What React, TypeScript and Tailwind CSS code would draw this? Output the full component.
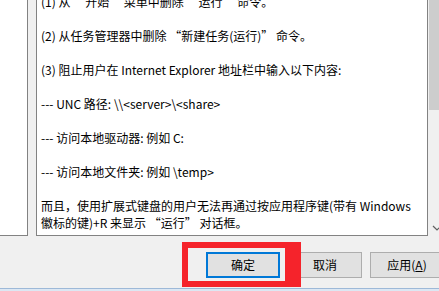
export default function App() {
  const font = { fontFamily: '"Noto Sans CJK SC", "Noto Sans", sans-serif' };
  return (
    <div className="relative h-[291px] w-[439px] overflow-hidden bg-[#f0f0f0] text-black" style={font}>
      {/* upper pane */}
      <div className="flex h-[236px]">
        <div className="w-[28px] shrink-0 border-r border-b border-[#828282] bg-white" />
        <div className="w-[8px] shrink-0" />
        <div className="flex-1 overflow-hidden border-l border-r border-b border-[#828282] bg-white pl-[4px]">
          <div className="mt-[-7px] text-[12px] leading-[17px] whitespace-nowrap">
            <p>(1) 从 “开始” 菜单中删除 “运行” 命令。</p>
            <p>&nbsp;</p>
            <p>(2) 从任务管理器中删除 “新建任务(运行)” 命令。</p>
            <p>&nbsp;</p>
            <p>(3) 阻止用户在 Internet Explorer 地址栏中输入以下内容:</p>
            <p>&nbsp;</p>
            <p>{"--- UNC 路径: \\\\<server>\\<share>"}</p>
            <p>&nbsp;</p>
            <p>--- 访问本地驱动器: 例如 C:</p>
            <p>&nbsp;</p>
            <p>{"--- 访问本地文件夹: 例如 \\temp>"}</p>
            <p>&nbsp;</p>
            <p>
              而且，使用扩展式键盘的用户无法再通过按应用程序键(带有 Windows
              <br />
              徽标的键)+R 来显示 “运行” 对话框。
            </p>
          </div>
        </div>
        <div className="flex w-[11px] shrink-0 flex-col bg-[#f0f0f0] pb-[5px]">
          <div className="ml-[1px] h-[110px] bg-[#cdcdcd]" />
          <div className="flex-1" />
          <svg width="10" height="6" viewBox="0 0 10 6" className="ml-[4px]">
            <path d="M1 1 L5 5 L9 1" fill="none" stroke="#606060" strokeWidth="1.2" />
          </svg>
        </div>
      </div>

      {/* buttons */}
      <div className="flex h-[52px] gap-[8px] pt-[16px] pl-[206px] text-[12px]">
        <button className="h-[26px] w-[74px] shrink-0 border-2 border-[#0078d7] bg-[#e1e1e1] leading-none">确定</button>
        <button className="h-[26px] w-[74px] shrink-0 border border-[#adadad] bg-[#e1e1e1] leading-none">取消</button>
        <button className="h-[26px] w-[74px] shrink-0 border border-[#adadad] bg-[#e1e1e1] leading-none">
          应用(<span className="underline">A</span>)
        </button>
      </div>

      <div className="h-[1px] bg-[#9db9d8]" />
      <div className="h-[2px] bg-[#dce7f3]" />

      {/* red annotation */}
      <div className="pointer-events-none absolute left-[182px] top-[242px] h-[45px] w-[119px] border-t-[6px] border-b-[6px] border-l-[6px] border-r-[16px] border-[#f5232b]" />
    </div>
  );
}
